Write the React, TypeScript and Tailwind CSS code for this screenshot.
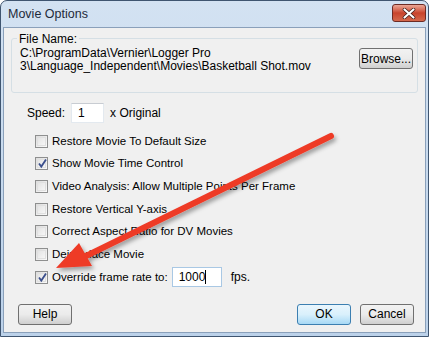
import React from "react";

const font = { fontFamily: '"Liberation Sans", Arial, sans-serif' };

function Check({ checked }: { checked?: boolean }) {
  return (
    <div className="relative w-[13px] h-[13px] border border-[#8e8f8f] bg-gradient-to-br from-[#dcdcdc] to-[#fbfbfb] flex items-center justify-center shrink-0">
      <div className="w-[9px] h-[9px] border border-[#e0e0e0] bg-gradient-to-br from-[#e4e4e4] to-[#f6f6f6]" />
      {checked && (
        <svg className="absolute left-[1px] top-[0px]" width="11" height="11" viewBox="0 0 11 11">
          <path d="M2 5.5 L4.3 8.6 L9 1.6" fill="none" stroke="#3b4f8c" strokeWidth="1.8" />
        </svg>
      )}
    </div>
  );
}

function Row({ label, checked, children }: { label: string; checked?: boolean; children?: React.ReactNode }) {
  return (
    <div className="flex items-center h-[22.67px] gap-[4px]">
      <Check checked={checked} />
      <span>{label}</span>
      {children}
    </div>
  );
}

function Btn({ label, primary }: { label: string; primary?: boolean }) {
  return (
    <div
      className={`w-[54px] h-[21px] rounded-[3px] border flex items-center justify-center text-[12px] ${
        primary
          ? "border-[#3c7fb1] bg-gradient-to-b from-[#eaf6fd] via-[#d9f0fc] to-[#a7d9f5]"
          : "border-[#707070] bg-gradient-to-b from-[#f2f2f2] via-[#ebebeb] to-[#cfcfcf]"
      }`}
    >
      {label}
    </div>
  );
}

export default function App() {
  return (
    <div className="w-[429px] h-[337px] relative overflow-hidden text-[11.5px] text-black" style={font}>
      <div className="w-full h-full rounded-t-[7px] border border-[#3f5570] bg-gradient-to-b from-[#d3e2f2] to-[#bcd2ea] flex flex-col">
        <div className="h-[26px] flex items-center justify-between pl-[7px] pr-[2px] shrink-0">
          <span className="text-[12.5px] text-[#1e2a3a]">Movie Options</span>
          <div className="self-start mt-[3px] w-[34px] h-[18px] rounded-[3px] border border-[#6d2b24] bg-gradient-to-b from-[#eba797] via-[#c8432c] to-[#d4684c] flex items-center justify-center">
            <svg width="14" height="11" viewBox="0 0 14 11">
              <path d="M2.5 1.5 L11.5 9.5 M11.5 1.5 L2.5 9.5" stroke="#3b1a16" strokeWidth="3.6" strokeLinecap="round" />
              <path d="M2.5 1.5 L11.5 9.5 M11.5 1.5 L2.5 9.5" stroke="#ffffff" strokeWidth="2.2" strokeLinecap="round" />
            </svg>
          </div>
        </div>
        <div className="flex-1 mx-[2px] mb-[3px] border border-[#8aa0ba] bg-[#f0f0f0] flex flex-col px-[7px] pt-[4px]">
          <div className="relative mt-[6px] h-[55px] border border-[#d5dfe5] rounded-[3px] flex items-start justify-between pl-[8px] pr-[4px] pt-[8px]">
            <span className="absolute -top-[7px] left-[5px] bg-[#f0f0f0] px-[2px] text-[12px] leading-[14px]">File Name:</span>
            <div className="leading-[13px] text-[12px]">
              <div>C:\ProgramData\Vernier\Logger Pro</div>
              <div>3\Language_Independent\Movies\Basketball Shot.mov</div>
            </div>
            <div className="mt-[1px]">
              <Btn label="Browse..." />
            </div>
          </div>
          <div className="flex items-center mt-[10px] ml-[16px] gap-[6px] h-[20px] text-[12px]">
            <span>Speed:</span>
            <div className="w-[33px] h-[20px] bg-white border border-[#e3e9ef] border-t-[#c8ccd2] flex items-center pl-[6px]">1</div>
            <span>x Original</span>
          </div>
          <div className="flex flex-col ml-[24px] mt-[7px]">
            <Row label="Restore Movie To Default Size" />
            <Row label="Show Movie Time Control" checked />
            <Row label="Video Analysis: Allow Multiple Points Per Frame" />
            <Row label="Restore Vertical Y-axis" />
            <Row label="Correct Aspect Ratio for DV Movies" />
            <Row label="Deinterlace Movie" />
            <Row label="Override frame rate to:" checked>
              <div className="ml-[0px] w-[50px] h-[20px] bg-white border border-[#a9c8e4] flex items-center pl-[6px] text-[12px]">
                1000<span className="w-px h-[14px] bg-black" />
              </div>
              <span className="ml-[5px] text-[12px]">fps.</span>
            </Row>
          </div>
          <div className="flex justify-between items-center mt-[15px] pl-[7px] pr-[4px]">
            <Btn label="Help" />
            <div className="flex gap-[9px]">
              <Btn label="OK" primary />
              <Btn label="Cancel" />
            </div>
          </div>
        </div>
      </div>
      <svg className="absolute inset-0 pointer-events-none" width="429" height="337" viewBox="0 0 429 337">
        <defs>
          <filter id="sh" x="-10%" y="-10%" width="130%" height="130%">
            <feDropShadow dx="2" dy="3" stdDeviation="2" floodColor="#000" floodOpacity="0.35" />
          </filter>
        </defs>
        <g filter="url(#sh)">
          <path d="M331 136 L86 256" stroke="#ee3a28" strokeWidth="6" strokeLinecap="round" />
          <path d="M56 268 L79 243 L92 266 Z" fill="#ee3a28" />
        </g>
      </svg>
    </div>
  );
}
